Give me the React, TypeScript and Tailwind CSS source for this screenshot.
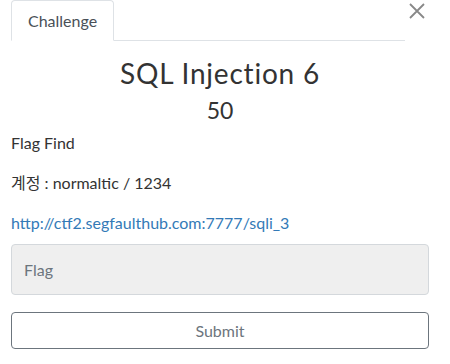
import React from 'react';

const App = () => {
  return (
    <div className="relative w-[450px] h-[364px] bg-white overflow-hidden">
      <div className="w-[418px] ml-[11px] font-['Lato','Liberation_Sans','Noto_Sans_CJK_KR',sans-serif] text-[#212529]">
        {/* Tabs + close */}
        <div className="flex border-b border-[#dee2e6] mr-[24px]">
          <div className="-mb-px px-4 h-[41px] flex items-center border border-[#dee2e6] border-b-white rounded-t-[4px] bg-white text-[16px] text-[#495057]">
            Challenge
          </div>
        </div>
        <button className="absolute left-[405px] top-0 w-[24px] h-[21px] flex items-center justify-center text-[#888]">
          <svg width="16" height="16" viewBox="0 0 16 16" fill="none" stroke="currentColor" strokeWidth="1.8">
            <path d="M1 1l14 14M15 1L1 15" />
          </svg>
        </button>

        {/* Challenge header */}
        <h3 className="text-center text-[28px] leading-[34px] tracking-[0.8px] mt-[15px] text-[#333]">SQL Injection 6</h3>
        <h4 className="text-center text-[23px] leading-[30px] mt-[5px] text-[#333]">50</h4>

        {/* Description */}
        <div className="mt-[6px] text-[16px] leading-[24px] text-[#333] space-y-[16px]">
          <p>Flag Find</p>
          <p>계정 : normaltic / 1234</p>
          <p>
            <a className="text-[#337ab7]">http://ctf2.segfaulthub.com:7777/sqli_3</a>
          </p>
        </div>

        {/* Flag form */}
        <input
          placeholder="Flag"
          className="mt-[9px] w-full h-[51px] px-3 bg-[#efefef] border border-[#d4d8dc] rounded-[4px] text-[16px] placeholder:text-[#6c757d] outline-none"
        />
        <button className="mt-[17px] w-full h-[37px] border border-[#6c757d] rounded-[4px] text-[16px] text-[#6c757d] bg-white">
          Submit
        </button>
      </div>
    </div>
  );
};

export default App;
